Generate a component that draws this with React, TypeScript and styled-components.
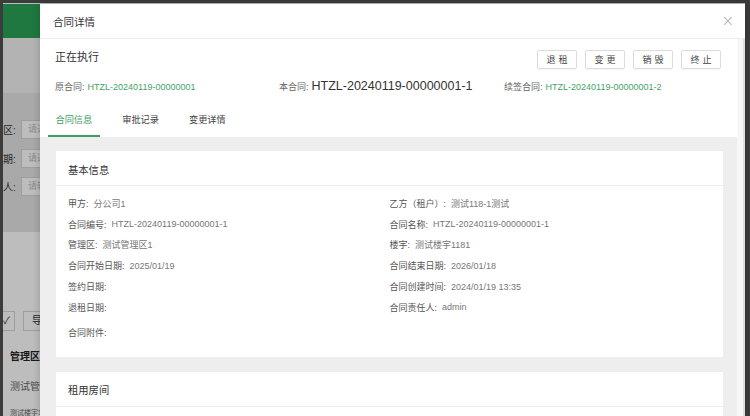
import styled, { createGlobalStyle } from "styled-components";

const GlobalStyle = createGlobalStyle`
  html, body {
    margin: 0;
    padding: 0;
    background: #3c3c3c;
  }
  body {
    font-family: "Liberation Sans", "Noto Sans CJK SC", sans-serif;
  }
  * {
    box-sizing: border-box;
  }
`;

const fields = [
  { label: "甲方:", value: "分公司1" },
  { label: "乙方（租户）:", value: "测试118-1测试" },
  { label: "合同编号:", value: "HTZL-20240119-00000001-1" },
  { label: "合同名称:", value: "HTZL-20240119-00000001-1" },
  { label: "管理区:", value: "测试管理区1" },
  { label: "楼宇:", value: "测试楼宇1181" },
  { label: "合同开始日期:", value: "2025/01/19" },
  { label: "合同结束日期:", value: "2026/01/18" },
  { label: "签约日期:", value: "" },
  { label: "合同创建时间:", value: "2024/01/19 13:35" },
  { label: "退租日期:", value: "" },
  { label: "合同责任人:", value: "admin" },
];

const actions = ["退租", "变更", "销毁", "终止"];
const tabs = ["合同信息", "审批记录", "变更详情"];
// only the ends of the page's filter labels show beside the dialog
const filters = [
  { label: "区:", hint: "请选择" },
  { label: "期:", hint: "请选择" },
  { label: "人:", hint: "请输入" },
];

const App = () => {
  return (
    <>
      <GlobalStyle />
      <Screen>
        <Page>
          <PageHeader />
          <PageStrip />
          <FilterBlock>
            {filters.map((f) => (
              <FilterRow key={f.label}>
                <FilterLabel>{f.label}</FilterLabel>
                <FilterInput>{f.hint}</FilterInput>
              </FilterRow>
            ))}
          </FilterBlock>
          <PageContent>
            <PageActions>
              <PageButton $cut>✓</PageButton>
              <PageButton>导出</PageButton>
            </PageActions>
            <PageTableHead>管理区</PageTableHead>
            <PageTableCell>测试管理区1</PageTableCell>
            <PageTableSmall>测试楼宇1181</PageTableSmall>
          </PageContent>
        </Page>
        <Mask />

        <Modal>
          <ModalHeader>
            <ModalTitle>合同详情</ModalTitle>
            <CloseButton>×</CloseButton>
          </ModalHeader>
          <ModalBody>
            <ScrollArea>
              <Summary>
                <StatusRow>
                  <StatusText>正在执行</StatusText>
                  <ActionGroup>
                    {actions.map((a) => (
                      <ActionButton key={a}>{a}</ActionButton>
                    ))}
                  </ActionGroup>
                </StatusRow>
                <ContractRow>
                  <ContractItem>
                    <ContractLabel>原合同:</ContractLabel>
                    <ContractLink>HTZL-20240119-00000001</ContractLink>
                  </ContractItem>
                  <ContractItem>
                    <ContractLabel>本合同:</ContractLabel>
                    <ContractCurrent>HTZL-20240119-00000001-1</ContractCurrent>
                  </ContractItem>
                  <ContractItem>
                    <ContractLabel>续签合同:</ContractLabel>
                    <ContractLink>HTZL-20240119-00000001-2</ContractLink>
                  </ContractItem>
                </ContractRow>
              </Summary>

              <TabBar>
                {tabs.map((t, i) => (
                  <Tab key={t} $active={i === 0}>
                    {t}
                  </Tab>
                ))}
              </TabBar>

              <Content>
                <Card>
                  <CardHeader>基本信息</CardHeader>
                  <FieldGrid>
                    {fields.map((f) => (
                      <Field key={f.label}>
                        <FieldLabel>{f.label}</FieldLabel>
                        <FieldValue>{f.value}</FieldValue>
                      </Field>
                    ))}
                    <Field $wide>
                      <FieldLabel>合同附件:</FieldLabel>
                    </Field>
                  </FieldGrid>
                </Card>
                <Card>
                  <CardHeader>租用房间</CardHeader>
                  <CardBlank />
                </Card>
              </Content>
            </ScrollArea>
            <ScrollTrack />
          </ModalBody>
        </Modal>
      </Screen>
    </>
  );
};

export default App;

const Screen = styled.div`
  position: relative;
  width: 750px;
  height: 416px;
  overflow: hidden;
  background: #3c3c3c;
  padding: 3px 5px 0 3px;
`;

/* background application page, dimmed by the mask */
const Page = styled.div`
  display: flex;
  flex-direction: column;
  height: 100%;
  background: #f0f0f0;
  border-top: 1px solid #ffffff;
`;

const PageHeader = styled.div`
  flex-shrink: 0;
  height: 34px;
  background: #2aa356;
`;

const PageStrip = styled.div`
  flex-shrink: 0;
  height: 55px;
  background: #f2f2f2;
`;

const FilterBlock = styled.div`
  flex-shrink: 0;
  display: flex;
  flex-direction: column;
  gap: 9.5px;
  height: 139px;
  padding-top: 27px;
  background: #e4e4e4;
`;

const FilterRow = styled.div`
  display: flex;
  align-items: center;
  gap: 4px;
  height: 19px;
`;

const FilterLabel = styled.div`
  width: 14px;
  white-space: nowrap;
  font-size: 10px;
  color: #333;
`;

const FilterInput = styled.div`
  width: 110px;
  height: 19px;
  padding: 0 6px;
  line-height: 17px;
  font-size: 9px;
  color: #bbb;
  background: #fff;
  border: 1px solid #d6d6d6;
`;

const PageContent = styled.div`
  flex: 1;
  display: flex;
  flex-direction: column;
  padding-top: 79px;
  background: #fff;
`;

const PageActions = styled.div`
  display: flex;
  gap: 8px;
  height: 20px;
`;

const PageButton = styled.div<{ $cut?: boolean }>`
  width: ${(p) => (p.$cut ? "12px" : "60px")};
  height: 20px;
  line-height: 18px;
  padding-left: ${(p) => (p.$cut ? "0" : "8px")};
  font-size: 10px;
  color: #333;
  border: 1px solid #d6d6d6;
  border-left: ${(p) => (p.$cut ? "none" : "1px solid #d6d6d6")};
`;

const PageTableHead = styled.div`
  margin-top: 17px;
  padding-left: 7px;
  height: 18px;
  font-size: 10px;
  font-weight: bold;
  color: #222;
`;

const PageTableCell = styled.div`
  margin-top: 12px;
  padding-left: 7px;
  font-size: 10px;
  color: #666;
`;

const PageTableSmall = styled.div`
  margin-top: 14px;
  padding-left: 7px;
  font-size: 7px;
  color: #666;
`;

const Mask = styled.div`
  position: absolute;
  top: 3px;
  left: 3px;
  right: 5px;
  bottom: 0;
  background: rgba(0, 0, 0, 0.26);
`;

/* dialog */
const Modal = styled.div`
  position: absolute;
  top: 4px;
  left: 40px;
  right: 5px;
  bottom: 0;
  display: flex;
  flex-direction: column;
  background: #fff;
  box-shadow: 0 0 8px rgba(0, 0, 0, 0.2);
`;

const ModalHeader = styled.div`
  flex-shrink: 0;
  display: flex;
  align-items: center;
  justify-content: space-between;
  height: 35px;
  padding: 0 11px 0 13px;
  border-bottom: 1px solid #eeeeee;
`;

const ModalTitle = styled.div`
  font-size: 10.5px;
  color: #333;
`;

const CloseButton = styled.div`
  font-size: 15px;
  line-height: 1;
  color: #a8a8a8;
  font-family: "DejaVu Sans", sans-serif;
  font-weight: 300;
`;

const ModalBody = styled.div`
  flex: 1;
  display: flex;
  min-height: 0;
`;

const ScrollArea = styled.div`
  flex: 1;
  display: flex;
  flex-direction: column;
  overflow: hidden;
`;

const ScrollTrack = styled.div`
  width: 8px;
  background: #f7f7f7;
  box-shadow: inset -2px 0 0 #dedede;
`;

const Summary = styled.div`
  flex-shrink: 0;
  display: flex;
  flex-direction: column;
  padding: 11px 16px 0 15px;
`;

const StatusRow = styled.div`
  display: flex;
  justify-content: space-between;
  align-items: flex-start;
  height: 19px;
`;

const StatusText = styled.div`
  font-size: 11px;
  line-height: 15px;
  color: #333;
`;

const ActionGroup = styled.div`
  display: flex;
  gap: 8px;
`;

const ActionButton = styled.div`
  display: flex;
  align-items: center;
  justify-content: center;
  width: 40px;
  height: 19px;
  padding-left: 3px;
  font-size: 9px;
  letter-spacing: 3px;
  color: #444;
  background: #fff;
  border: 1px solid #dcdcdc;
  border-radius: 2px;
  box-shadow: 0 1px 1px rgba(0, 0, 0, 0.04);
`;

const ContractRow = styled.div`
  display: grid;
  grid-template-columns: 224px 225px 1fr;
  align-items: center;
  height: 16px;
  margin-top: 9px;
`;

const ContractItem = styled.div`
  display: flex;
  align-items: baseline;
  gap: 3px;
  white-space: nowrap;
`;

const ContractLabel = styled.span`
  font-size: 9px;
  color: #666;
`;

const ContractLink = styled.span`
  font-size: 9px;
  color: #43a466;
`;

const ContractCurrent = styled.span`
  font-size: 12.5px;
  color: #333;
`;

const TabBar = styled.div`
  flex-shrink: 0;
  display: flex;
  gap: 15px;
  height: 34px;
  margin-top: 9px;
  padding-left: 8px;
`;

const Tab = styled.div<{ $active?: boolean }>`
  display: flex;
  align-items: center;
  padding: 0 7.5px;
  font-size: 9.2px;
  color: ${(p) => (p.$active ? "#3d9f5f" : "#444")};
  border-bottom: 2px solid ${(p) => (p.$active ? "#3d9f5f" : "transparent")};
`;

const Content = styled.div`
  flex: 1 0 auto;
  display: flex;
  flex-direction: column;
  gap: 15px;
  padding: 14px 14px 0 16px;
  background: #eeeeee;
`;

const Card = styled.div`
  flex-shrink: 0;
  display: flex;
  flex-direction: column;
  background: #fff;
`;

const CardHeader = styled.div`
  flex-shrink: 0;
  height: 35px;
  padding: 2px 12px 0;
  display: flex;
  align-items: center;
  font-size: 10.3px;
  color: #333;
  border-bottom: 1px solid #eeeeee;
`;

const CardBlank = styled.div`
  height: 40px;
`;

const FieldGrid = styled.div`
  display: grid;
  grid-template-columns: 1fr 1fr;
  grid-auto-rows: 20.8px;
  padding: 7px 12px 18px;
`;

const Field = styled.div<{ $wide?: boolean }>`
  display: flex;
  align-items: center;
  gap: 5px;
  white-space: nowrap;
  font-size: 9px;
  grid-column: ${(p) => (p.$wide ? "1 / -1" : "auto")};
  margin-top: ${(p) => (p.$wide ? "8px" : "0")};
`;

const FieldLabel = styled.span`
  color: #555;
`;

const FieldValue = styled.span`
  color: #777;
`;
